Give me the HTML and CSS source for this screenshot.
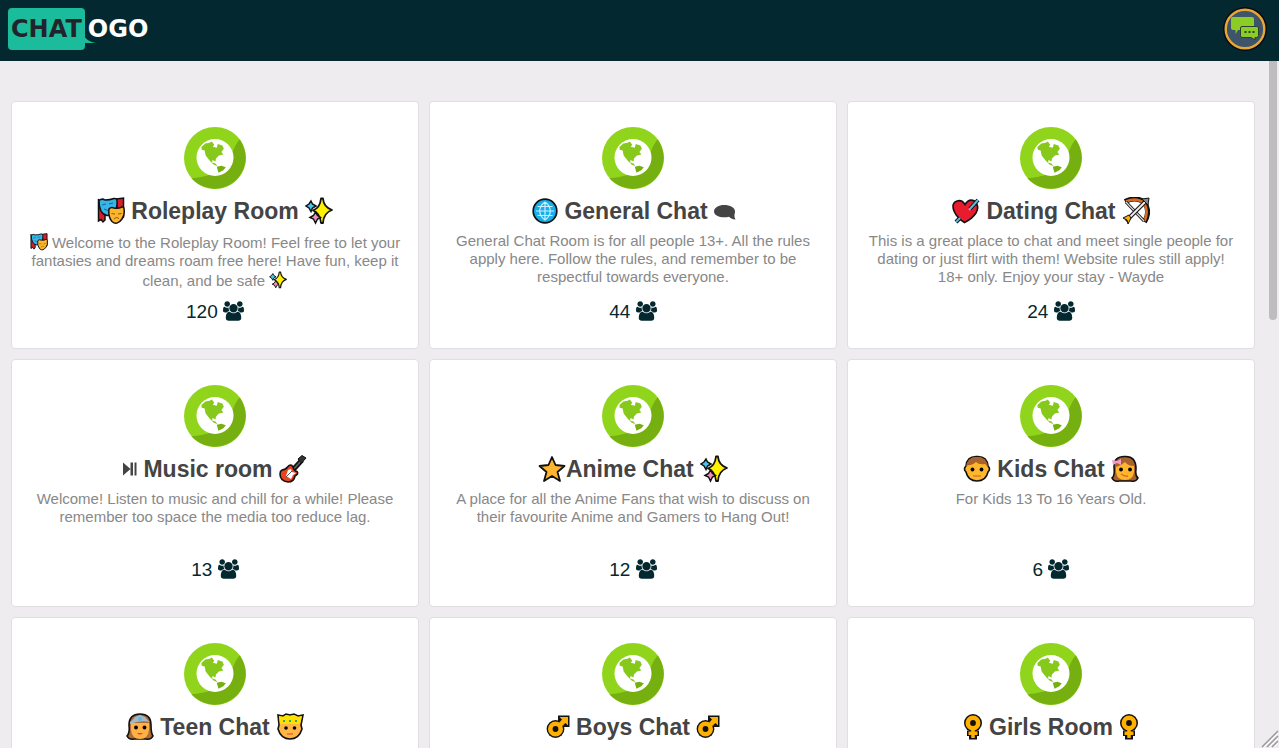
FILE: index.html
```html
<!DOCTYPE html>
<html lang="en">
<head>
<meta charset="utf-8">
<title>Chatogo</title>
<link rel="stylesheet" href="styles.css">
</head>
<body>
<svg class="sprite" aria-hidden="true">
  <symbol id="globe" viewBox="0 0 63 63">
    <circle cx="31.500" cy="31.500" r="31.500" fill="#90d51c"/>
    <path d="M56.500 12.500A31.500 31.500 0 0 1 7.500 52C22 51 32 48 40 42C50 34 47 24 56.500 12.500Z" fill="#75af10"/>
    <circle cx="31.500" cy="31" r="18.800" fill="#fff"/>
    <path d="M17.700 20.300L21.700 16.700L26 16L28.300 14.700L30.700 18L29.300 20L33.300 21L34.300 17.300L39 18.700L40.500 22L38 25.300L40 28L35.500 29L32.500 32L32 35L29 33.500L28.500 36L32 37L34 40L30 38L26 34L22 29L21 24L18 23Z" fill="#86c91a"/>
    <path d="M33.300 40.500L38 39.500L42.500 41L40 44L35 46.500Z" fill="#75af10"/>
  </symbol>
  <symbol id="users" viewBox="0 0 1920 1792">
    <path d="M593 896q-162 5-265 128h-134q-82 0-138-40.500t-56-118.500q0-353 124-353 6 0 43.500 21t97.500 42.500 119 21.500q67 0 133-23-5 37-5 66 0 139 81 256zm1071 637q0 120-73 189.500t-194 69.500h-874q-121 0-194-69.500t-73-189.500q0-53 3.500-103.500t14-109 26.500-108.500 43-97.500 62-81 85.500-53.500 111.500-20q10 0 43 21.500t73 48 107 48 135 21.500 135-21.500 107-48 73-48 43-21.500q61 0 111.500 20t85.500 53.500 62 81 43 97.500 26.500 108.500 14 109 3.500 103.500zm-1024-1277q0 106-75 181t-181 75-181-75-75-181 75-181 181-75 181 75 75 181zm704 384q0 159-112.500 271.500t-271.500 112.500-271.500-112.500-112.500-271.500 112.500-271.500 271.500-112.500 271.500 112.500 112.500 271.500zm576 225q0 78-56 118.500t-138 40.500h-134q-103-123-265-128 81-117 81-256 0-29-5-66 66 23 133 23 59 0 119-21.500t97.500-42.500 43.500-21q124 0 124 353zm-128-609q0 106-75 181t-181 75-181-75-75-181 75-181 181-75 181 75 75 181z" fill="currentColor"/>
  </symbol>
  <symbol id="masks" viewBox="0 0 28 28">
    <path d="M1.500 2V24L4 22.500L6 25L8 23V14ZM19 2L26.500 1V20L22 24Z" fill="#d81e2c" stroke="#111" stroke-width="1.500"/>
    <path d="M2 3.500Q5 1 8 3Q13 3 17 1.500Q20 1 20 4Q20.500 10 18 14Q15 19 10 18.500Q2 17 2 3.500Z" fill="#35b5ea" stroke="#111" stroke-width="1.500"/>
    <path d="M5 8l4-1M12 7l4-1M7 12q4 3 7 0" fill="none" stroke="#17678f"/>
    <path d="M12 12Q14 9.500 17 11Q21 12 25 10Q27 9.500 27 12Q28 18 25 22Q20 29 15 24.500Q11 20 12 12Z" fill="#ffb52b" stroke="#111" stroke-width="1.500"/>
    <path d="M14.500 16.500l3.500.5M21 17l3.500-.5M17 22q2.500-3 5-.5" fill="none" stroke="#8b5710"/>
  </symbol>
  <symbol id="sparkles" viewBox="0 0 28 28">
    <path d="M16 1.500H18Q18.500 10 27 13Q18.500 16 18 26H16Q15 16 8 13.500Q15 11 16 1.500Z" fill="#fff100" stroke="#111" stroke-width="1.800" stroke-linejoin="round"/>
    <path d="M6 4L7.500 7L11 9L7.500 11L6 14.500L4 11L1 9L4 7Z" fill="#45c8ee" stroke="#111" stroke-width="1.500"/>
    <path d="M10.500 15L12.500 18.500L15.500 20.500L12.500 22L10.500 26L8.500 22L5 20.500L8.500 18.500Z" fill="#f58fc2" stroke="#111" stroke-width="1.500"/>
  </symbol>
  <symbol id="meridians" viewBox="0 0 28 28">
    <circle cx="15" cy="14" r="11.800" fill="#18aeea" stroke="#111" stroke-width="1.700"/>
    <path d="M15 5v18M6 14h18M7.500 9.500h15M7.500 18.500h15M15 5c-7 5-7 13 0 18M15 5c7 5 7 13 0 18" fill="none" stroke="#c8f0ff" stroke-width="1.200"/>
  </symbol>
  <symbol id="bubble" viewBox="0 0 22 28">
    <path d="M10 8C16 8 21 10.500 21 14.500C21 17 19.500 18.500 21.500 22.500C18 22.500 16.500 21 15 19.800C8 21.500 0 19 0 14.500C0 10.500 5 8 10 8Z" fill="#444"/>
  </symbol>
  <symbol id="heart" viewBox="0 0 28 28">
    <path d="M13 7.500Q17 1 22.500 4Q28 9 24 16Q20 22 12.500 25.500Q5 21 2 14Q-1 6 5 4Q10 2.500 13 7.500Z" fill="#e81c2c" stroke="#111" stroke-width="1.600"/>
    <path d="M18 12L26 3M4 25l4-4" fill="none" stroke="#111" stroke-width="4"/>
    <path d="M17 13L26 3M4 25l4-4" fill="none" stroke="#62b8df" stroke-width="2"/>
  </symbol>
  <symbol id="bow" viewBox="0 0 28 28">
    <path d="M3 4.500Q14-1 22 5Q29 14 22.500 25" fill="none" stroke="#111" stroke-width="5"/>
    <path d="M4 4.500Q14 0 22 6Q27 14 22.500 24" fill="none" stroke="#d56a22" stroke-width="2.700"/>
    <path d="M4 5L22 24" stroke="#111" stroke-width="3"/><path d="M4 5L22 24" stroke="#ddd" stroke-width="1.200"/>
    <path d="M4 24L25 3" stroke="#111" stroke-width="4"/><path d="M5 23L24 4" stroke="#eee" stroke-width="2"/>
    <path d="M20 2L27 1L26 8Z" fill="#888" stroke="#111"/><path d="M1 21L7 18L9 21L6 27L5 23Z" fill="#ffb000" stroke="#111"/>
  </symbol>
  <symbol id="playpause" viewBox="0 0 14 28">
    <path d="M0 7.500L7.500 14L0 20.500ZM7.500 7.500h2.500v13H7.500ZM11.500 7.500h2v13h-2Z" fill="#444"/>
  </symbol>
  <symbol id="guitar" viewBox="0 0 28 28">
    <path d="M12 17L23 5" stroke="#111" stroke-width="5"/><path d="M13 16L22 6" stroke="#666" stroke-width="1.500"/>
    <path d="M19 4L23 .5L27 3L22.500 8Z" fill="#333" stroke="#111"/>
    <path d="M3 15Q7 14.500 8.500 12Q12 8 14 12Q15 16 18 16.500Q20 19 16 21Q15 27 9 27Q1 26 1 19Q1 16 3 15Z" fill="#ed421e" stroke="#111" stroke-width="1.600"/>
    <path d="M9 15l3-1 1 3 4 1-3 2-2 4-5-3Z" fill="#fff"/><path d="M7 22l6-6" stroke="#555"/>
  </symbol>
  <symbol id="star" viewBox="0 0 28 28">
    <path d="M14 2L17.500 10L26.500 11L19.500 17L22 26L14 21L6 26L8.500 17L1.500 11L10.500 10Z" fill="#ffb52e" stroke="#111" stroke-width="1.800" stroke-linejoin="round"/>
  </symbol>
  <symbol id="boy" viewBox="0 0 28 28">
    <path d="M3 11Q4 1 14 1.500Q24 1 25 11Q28 14 25 17Q23 26 14 26Q5 26 3 17Q0 14 3 11Z" fill="#ffb62c" stroke="#111" stroke-width="1.600"/>
    <path d="M3 12Q4 2 14 2Q24 2 25 12L22 9Q16 10 13 7Q9 11 5 10Z" fill="#a8622d"/>
    <circle cx="9.500" cy="14.500" r="1.900"/><circle cx="18.500" cy="14.500" r="1.900"/><path d="M10 21h8" stroke="#bf6425"/>
  </symbol>
  <symbol id="girl" viewBox="0 0 28 28">
    <path d="M3 12Q3 1 14 1.500Q25 1 25 14Q24 21 27 23Q25 27 20 26H8Q3 27 1 23Q4 21 3 12Z" fill="#a8622d" stroke="#111" stroke-width="1.600"/>
    <path d="M5 12Q10 11 14 7Q17 11 23 11V17Q22 25 14 25Q6 25 5 17Z" fill="#ffb62c"/>
    <path d="M1 5l5 1 4-2v6L6 8 2 10Z" fill="#f29aca"/><circle cx="10" cy="14.500" r="1.900"/><circle cx="19" cy="14.500" r="1.900"/><path d="M10 19q4 3 7 2" fill="none" stroke="#e6672d" stroke-width="1.500"/>
  </symbol>
  <symbol id="princess" viewBox="0 0 28 28">
    <path d="M3 12Q3 1 14 1Q25 1 25 12Q25 20 27 23Q25 27 20 26H8Q3 27 1 23Q4 20 3 12Z" fill="#ad6a37" stroke="#111" stroke-width="1.600"/>
    <path d="M5 10H23V17Q22 26 14 26Q6 26 5 17Z" fill="#ffb047"/><path d="M4 9Q7 7 9 4L14 2L19 4Q21 7 24 9Q14 7 4 11Z" fill="#a5b8c7"/><circle cx="14" cy="6" r="2" fill="#4cbfe8"/>
    <circle cx="10" cy="14.500" r="1.900"/><circle cx="18.500" cy="14.500" r="1.900"/><path d="M11 20q3 3 6 0Z" fill="#ee3c24"/>
  </symbol>
  <symbol id="prince" viewBox="0 0 28 28">
    <path d="M2 2L7 3L10 1L14 2L18 1L22 3L27 2L25 12L26 16Q23 26 14 26Q5 26 2 16L3 12Z" fill="#ffb644" stroke="#111" stroke-width="1.600"/>
    <path d="M3 3L7 4L10 2L14 3L18 2L22 4L26 3L24 11H4Z" fill="#ffe100"/><path d="M7 8h2M13 8h2M19 8h2" stroke="#2ba876" stroke-width="2"/>
    <circle cx="10" cy="15" r="1.800"/><circle cx="18.500" cy="15" r="1.800"/><path d="M11 21h6" stroke="#e26a35" stroke-width="1.500"/>
  </symbol>
  <symbol id="male" viewBox="0 0 24 28">
    <path d="M12 2.500H23.500V14H18V12L16 14L11 10L14 8H12Z" fill="#111"/><circle cx="9.500" cy="16" r="8.900" fill="#111"/>
    <path d="M13.500 4H22V12.500L19.500 10L15 14L12 11L16 6.500Z" fill="#ffb000"/><circle cx="9.500" cy="16" r="5.200" fill="#111" stroke="#ffb000" stroke-width="4.600"/>
  </symbol>
  <symbol id="female" viewBox="0 0 20 28">
    <circle cx="10" cy="10" r="9" fill="#111"/><path d="M6 16H14V17.500H16V23H14V26.500H6V23H4V17.500H6Z" fill="#111"/>
    <path d="M10 14V25M5.500 20.200H14.500" fill="none" stroke="#ffb000" stroke-width="3.500"/><circle cx="10" cy="10" r="5.200" fill="#111" stroke="#ffb000" stroke-width="4.600"/>
  </symbol>
</svg>

<header class="topbar">
  <a class="logo" href="#" aria-label="Chatogo"><span class="logo-box">CHAT<svg class="logo-tail" viewBox="0 0 14 12" aria-hidden="true"><path d="M0 0C1 5 6 9 13 10H0Z" fill="#1abc9c"/></svg></span><span class="logo-rest">OGO</span></a>
  <button class="chat-button" type="button" aria-label="Chat rooms">
    <svg viewBox="-1 -1 44 44" aria-hidden="true">
      <circle cx="21" cy="21" r="22" fill="#080b10"/>
      <circle cx="21" cy="21" r="19.300" fill="#3e546b" stroke="#e8a735" stroke-width="2.400"/>
      <path d="M9 9H28Q30 9 30 11V20Q30 22 28 22H14L11.500 26V22H9Q7 22 7 20V11Q7 9 9 9Z" fill="#8ccc27"/>
      <path d="M18 18.500H32.500Q34.500 18.500 34.500 20V27.500Q34.500 29.500 32.500 29.500H31V32L27 29.500H18Q16.500 29.500 16.500 27.500V20Q16.500 18.500 18 18.500Z" fill="#8ccc27" stroke="#29402f" stroke-width="1"/>
      <path d="M20.500 23h2v2h-2ZM24.500 23h2v2h-2ZM28.500 23h2v2h-2Z" fill="#29402f"/>
    </svg>
  </button>
</header>

<main class="rooms-view">
  <div class="rooms">
    <article class="room">
      <svg class="room-icon"><use href="#globe"/></svg>
      <h2 class="room-title"><svg class="emoji"><use href="#masks"/></svg> Roleplay Room <svg class="emoji"><use href="#sparkles"/></svg></h2>
      <p class="room-text"><svg class="emoji-small"><use href="#masks"/></svg> Welcome to the Roleplay Room! Feel free to let your fantasies and dreams roam free here! Have fun, keep it clean, and be safe <svg class="emoji-small"><use href="#sparkles"/></svg></p>
      <p class="room-count">120 <svg class="users"><use href="#users"/></svg></p>
    </article>
    <article class="room">
      <svg class="room-icon"><use href="#globe"/></svg>
      <h2 class="room-title"><svg class="emoji"><use href="#meridians"/></svg> General Chat <svg class="emoji emoji-22"><use href="#bubble"/></svg></h2>
      <p class="room-text">General Chat Room is for all people 13+. All the rules apply here. Follow the rules, and remember to be respectful towards everyone.</p>
      <p class="room-count">44 <svg class="users"><use href="#users"/></svg></p>
    </article>
    <article class="room">
      <svg class="room-icon"><use href="#globe"/></svg>
      <h2 class="room-title"><svg class="emoji"><use href="#heart"/></svg> Dating Chat <svg class="emoji"><use href="#bow"/></svg></h2>
      <p class="room-text">This is a great place to chat and meet single people for dating or just flirt with them! Website rules still apply! 18+ only. Enjoy your stay - Wayde</p>
      <p class="room-count">24 <svg class="users"><use href="#users"/></svg></p>
    </article>
    <article class="room">
      <svg class="room-icon"><use href="#globe"/></svg>
      <h2 class="room-title"><svg class="emoji emoji-14"><use href="#playpause"/></svg> Music room <svg class="emoji"><use href="#guitar"/></svg></h2>
      <p class="room-text">Welcome! Listen to music and chill for a while! Please remember too space the media too reduce lag.</p>
      <p class="room-count">13 <svg class="users"><use href="#users"/></svg></p>
    </article>
    <article class="room">
      <svg class="room-icon"><use href="#globe"/></svg>
      <h2 class="room-title"><svg class="emoji"><use href="#star"/></svg>Anime Chat <svg class="emoji"><use href="#sparkles"/></svg></h2>
      <p class="room-text">A place for all the Anime Fans that wish to discuss on their favourite Anime and Gamers to Hang Out!</p>
      <p class="room-count">12 <svg class="users"><use href="#users"/></svg></p>
    </article>
    <article class="room">
      <svg class="room-icon"><use href="#globe"/></svg>
      <h2 class="room-title"><svg class="emoji"><use href="#boy"/></svg> Kids Chat <svg class="emoji"><use href="#girl"/></svg></h2>
      <p class="room-text">For Kids 13 To 16 Years Old.</p>
      <p class="room-count">6 <svg class="users"><use href="#users"/></svg></p>
    </article>
    <article class="room">
      <svg class="room-icon"><use href="#globe"/></svg>
      <h2 class="room-title"><svg class="emoji"><use href="#princess"/></svg> Teen Chat <svg class="emoji"><use href="#prince"/></svg></h2>
    </article>
    <article class="room">
      <svg class="room-icon"><use href="#globe"/></svg>
      <h2 class="room-title"><svg class="emoji emoji-24"><use href="#male"/></svg> Boys Chat <svg class="emoji emoji-24"><use href="#male"/></svg></h2>
    </article>
    <article class="room">
      <svg class="room-icon"><use href="#globe"/></svg>
      <h2 class="room-title"><svg class="emoji emoji-20"><use href="#female"/></svg> Girls Room <svg class="emoji emoji-20"><use href="#female"/></svg></h2>
    </article>
  </div>
  <div class="scroll-thumb"></div>
  <svg class="grip" viewBox="0 0 18 18" aria-hidden="true"><path d="M1 17L17 1M6 17L17 6M11 17L17 11" stroke="#999" stroke-width="1.500"/><path d="M3 17L17 3M8 17L17 8M13 17L17 13" stroke="#fff"/></svg>
</main>
</body>
</html>
```
FILE: styles.css
```css
* { box-sizing: border-box; }

body {
  margin: 0;
  height: 100vh;
  display: flex;
  flex-direction: column;
  overflow: hidden;
  background: #eeecef;
  font-family: "Liberation Sans", Arial, sans-serif;
}

.sprite {
  position: absolute;
  width: 0;
  height: 0;
}

.topbar {
  flex: none;
  height: 61px;
  padding: 0 12px 3px 8px;
  display: flex;
  align-items: center;
  justify-content: space-between;
  background: #032830;
}

.logo {
  display: flex;
  align-items: center;
  gap: 3px;
  font-family: "DejaVu Sans", sans-serif;
  font-size: 24px;
  font-weight: 700;
  line-height: 42px;
  text-decoration: none;
}

.logo-box {
  position: relative;
  padding: 0 3px;
  border-radius: 4px;
  background: #1abc9c;
  color: #20252b;
}

.logo-tail {
  position: absolute;
  left: 100%;
  bottom: 5px;
  width: 14px;
  height: 12px;
  margin-left: -2px;
}

.logo-rest {
  position: relative;
  color: #fff;
}

.chat-button {
  width: 44px;
  height: 44px;
  padding: 0;
  border: 0;
  background: none;
}

.chat-button svg { display: block; }

.rooms-view {
  position: relative;
  flex: 1;
  min-height: 0;
  padding: 40px 24px 0 11px;
  overflow: hidden;
}

.rooms {
  display: grid;
  grid-template-columns: repeat(3, 1fr);
  gap: 10px;
}

.room {
  min-height: 248px;
  padding: 25px 16px 18px;
  border: 1px solid #e0dee2;
  border-radius: 4px;
  background: #fff;
  text-align: center;
}

.room-icon {
  display: block;
  width: 62px;
  height: 62px;
  margin: 0 auto 8px;
}

.room-title {
  margin: 0 0 7px;
  color: #444;
  font-size: 23px;
  line-height: 28px;
}

.emoji {
  width: 28px;
  height: 28px;
  vertical-align: -6px;
}

.emoji-14 { width: 14px; }
.emoji-20 { width: 20px; }
.emoji-22 { width: 22px; }
.emoji-24 { width: 24px; }

.room-text {
  height: 67px;
  margin: 0;
  color: #888;
  font-size: 15px;
  line-height: 18px;
}

.emoji-small {
  width: 18px;
  height: 20px;
  vertical-align: -4px;
}

.room-count {
  margin: 0;
  color: #032830;
  font-size: 19px;
  line-height: 26px;
}

.users {
  width: 21px;
  height: 20px;
  vertical-align: -3px;
}

.scroll-thumb {
  position: absolute;
  top: 0;
  right: 2px;
  width: 8px;
  height: 259px;
  border-radius: 0 0 4px 4px;
  background: #bdbcbe;
}

.grip {
  position: absolute;
  right: 0;
  bottom: 0;
  width: 18px;
  height: 18px;
}
```
